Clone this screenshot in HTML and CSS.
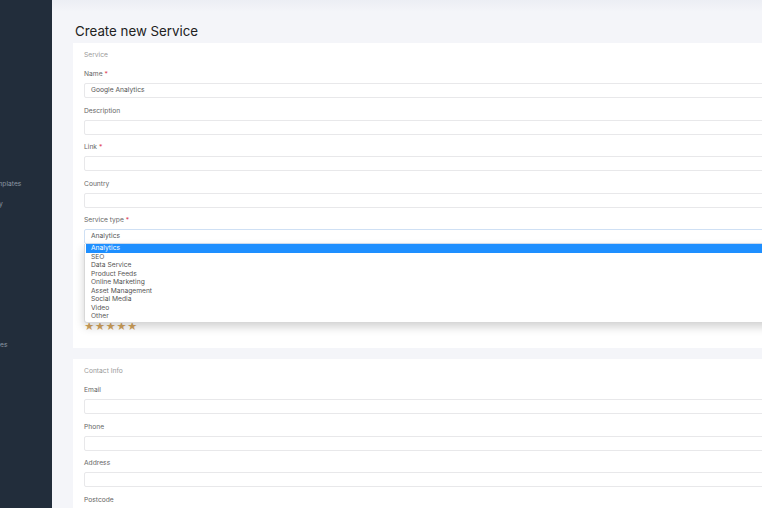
FILE: index.html
```html
<!doctype html>
<html lang="en">

<head>
    <meta charset="utf-8">
    <title>Create new Service</title>

    <link rel="stylesheet" href="styles.css">
</head>

<body>
    <div class="app">
        <aside class="sidebar">
            <ul class="nav">
                <li class="nav-templates">Email Templates</li>
                <li class="nav-inventory">Inventory</li>
                <li class="nav-services">Services</li>
            </ul>
        </aside>

        <main class="main">
            <div class="topbar"></div>
            <h1 class="title">Create new Service</h1>

            <form class="card" name="serviceform">
                <div class="card-title">Service</div>

                <div class="field">
                    <label>Name <span class="req">*</span></label>
                    <div class="input">Google Analytics</div>
                </div>
                <div class="field">
                    <label>Description</label>
                    <div class="input"></div>
                </div>
                <div class="field">
                    <label>Link <span class="req">*</span></label>
                    <div class="input"></div>
                </div>
                <div class="field">
                    <label>Country</label>
                    <div class="input"></div>
                </div>
                <div class="field field-select">
                    <label>Service type <span class="req">*</span></label>
                    <div class="input input-focus">Analytics</div>

                    <ul class="dropdown">
                        <li class="selected">Analytics</li>
                        <li>SEO</li>
                        <li>Data Service</li>
                        <li>Product Feeds</li>
                        <li>Online Marketing</li>
                        <li>Asset Management</li>
                        <li>Social Media</li>
                        <li>Video</li>
                        <li>Other</li>
                    </ul>
                </div>

                <div class="stars">&#9733;&#9733;&#9733;&#9733;&#9733;</div>
            </form>

            <form class="card" name="contactform">
                <div class="card-title">Contact Info</div>

                <div class="field">
                    <label>Email</label>
                    <div class="input"></div>
                </div>
                <div class="field">
                    <label>Phone</label>
                    <div class="input"></div>
                </div>
                <div class="field">
                    <label>Address</label>
                    <div class="input"></div>
                </div>
                <div class="field">
                    <label>Postcode</label>
                    <div class="input"></div>
                </div>
            </form>
        </main>
    </div>
</body>

</html>
```

FILE: styles.css
```css
html, body {
    margin: 0;
    height: 100%;
    overflow: hidden;
}
body {
    font-family: Inter, "Noto Sans", sans-serif;
    background-color: #f4f5f9;
    color: #333;
}
.app {
    display: flex;
    height: 100%;
}
.sidebar {
    width: 52px;
    flex-shrink: 0;
    background-color: #222d3b;
    overflow: hidden;
}
.nav {
    list-style: none;
    margin: 0;
    padding: 0;
    font-size: 6.7px;
    color: #8c96a3;
    white-space: nowrap;
}
.nav li {
    line-height: 9px;
}
.nav-templates {
    margin: 180px 0 0 -30px;
}
.nav-inventory {
    margin: 11px 0 0 -27px;
}
.nav-services {
    margin: 132px 0 0 -20px;
}
.main {
    flex: 1;
    min-width: 0;
    padding: 0 0 0 21px;
}
.topbar {
    height: 12px;
    margin-left: -21px;
    background: linear-gradient(#eceef4, #f4f5f9);
}
.title {
    margin: 11px 0 3px 2px;
    font-size: 13.3px;
    font-weight: 400;
    line-height: 17px;
    color: #222;
}
.card {
    background-color: #fff;
    width: 800px;
    padding: 8px 11px 17px 11px;
    margin-bottom: 11px;
    box-sizing: border-box;
}
.card-title {
    font-size: 6.7px;
    line-height: 9px;
    color: #9a9a9a;
    margin-bottom: 10px;
}
.field {
    margin-bottom: 8.5px;
}
.field label {
    display: block;
    font-size: 6.7px;
    line-height: 9px;
    color: #666;
    margin-bottom: 4px;
}
.req {
    color: #e0475a;
}
.input {
    height: 13px;
    border: 1px solid #e8e8ea;
    border-radius: 2px;
    padding: 0 6px;
    font-size: 6.7px;
    line-height: 13px;
    color: #555;
}
.input-focus {
    border-color: #cfe0f4;
}
.field-select {
    position: relative;
    margin-bottom: 77px;
}
.dropdown {
    position: absolute;
    left: 0;
    right: 0;
    top: 28px;
    list-style: none;
    margin: 0;
    padding: 0 0 1px 1px;
    background-color: #fff;
    border: 1px solid #d8d8d8;
    border-top: none;
    border-radius: 0 0 3px 3px;
    box-shadow: 0 4px 10px rgba(0, 0, 0, 0.18);
    font-size: 6.7px;
    color: #555;
}
.dropdown li {
    line-height: 8.5px;
    padding-left: 5px;
}
.dropdown li.selected {
    background-color: #1e8fff;
    color: #fff;
}
.stars {
    font-size: 10px;
    line-height: 10px;
    letter-spacing: 0.3px;
    color: #d2a35c;
}
```
